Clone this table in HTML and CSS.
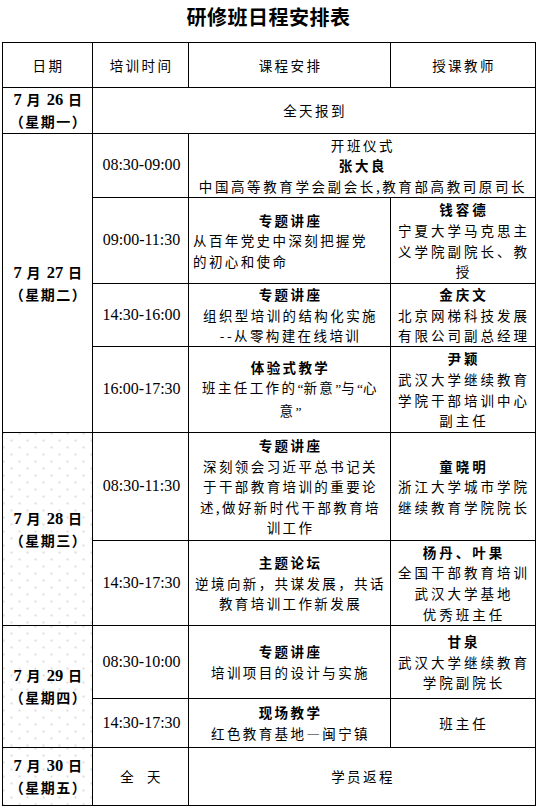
FILE: index.html
```html
<!DOCTYPE html>
<html lang="zh-CN">
<head>
<meta charset="utf-8">
<title>研修班日程安排表</title>
<link rel="stylesheet" href="styles.css">
</head>
<body>
<div class="page">
  <h1 class="title">研修班日程安排表</h1>
  <table class="sched">
    <colgroup>
      <col class="c1"><col class="c2"><col class="c3"><col class="c4">
    </colgroup>
    <tr class="h45">
      <td>日期</td><td>培训时间</td><td>课程安排</td><td>授课教师</td>
    </tr>
    <tr class="h46">
      <td class="date"><span class="num">7</span> 月 <span class="num">26</span> 日<br>（星期一）</td>
      <td colspan="3">全天报到</td>
    </tr>
    <tr class="h64">
      <td class="date" rowspan="4"><span class="num">7</span> 月 <span class="num">27</span> 日<br>（星期二）</td>
      <td class="time">08:30-09:00</td>
      <td colspan="2" class="wide">开班仪式<br><b>张大良</b><br>中国高等教育学会副会长,教育部高教司原司长</td>
    </tr>
    <tr class="h86">
      <td class="time">09:00-11:30</td>
      <td><b>专题讲座</b><br><span class="left">从百年党史中深刻把握党<br>的初心和使命</span></td>
      <td class="teach"><b>钱容德</b><br>宁夏大学马克思主<br>义学院副院长、教<br>授</td>
    </tr>
    <tr class="h63">
      <td class="time">14:30-16:00</td>
      <td><b>专题讲座</b><br>组织型培训的结构化实施<br>--从零构建在线培训</td>
      <td class="teach"><b>金庆文</b><br>北京网梯科技发展<br>有限公司副总经理</td>
    </tr>
    <tr class="h86">
      <td class="time">16:00-17:30</td>
      <td><b>体验式教学</b><br>班主任工作的<span class="lat">“</span>新意<span class="lat">”</span>与<span class="lat">“</span>心<br>意<span class="lat">”</span></td>
      <td class="teach"><b>尹颖</b><br>武汉大学继续教育<br>学院干部培训中心<br>副主任</td>
    </tr>
    <tr class="h108">
      <td class="date dots" rowspan="2"><span class="num">7</span> 月 <span class="num">28</span> 日<br>（星期三）</td>
      <td class="time">08:30-11:30</td>
      <td><b>专题讲座</b><br>深刻领会习近平总书记关<br>于干部教育培训的重要论<br>述,做好新时代干部教育培<br>训工作</td>
      <td class="teach"><b>童晓明</b><br>浙江大学城市学院<br>继续教育学院院长</td>
    </tr>
    <tr class="h85">
      <td class="time">14:30-17:30</td>
      <td><b>主题论坛</b><br>逆境向新，共谋发展，共话<br>教育培训工作新发展</td>
      <td class="teach"><b>杨丹、叶果</b><br>全国干部教育培训<br>武汉大学基地<br>优秀班主任</td>
    </tr>
    <tr class="h73">
      <td class="date dots" rowspan="2"><span class="num">7</span> 月 <span class="num">29</span> 日<br>（星期四）</td>
      <td class="time">08:30-10:00</td>
      <td><b>专题讲座</b><br>培训项目的设计与实施</td>
      <td class="teach"><b>甘泉</b><br>武汉大学继续教育<br>学院副院长</td>
    </tr>
    <tr class="h49">
      <td class="time">14:30-17:30</td>
      <td><b>现场教学</b><br>红色教育基地—闽宁镇</td>
      <td class="teach">班主任</td>
    </tr>
    <tr class="h58">
      <td class="date dots"><span class="num">7</span> 月 <span class="num">30</span> 日<br>（星期五）</td>
      <td>全&nbsp;&nbsp;天</td>
      <td colspan="2">学员返程</td>
    </tr>
  </table>
</div>
</body>
</html>
```

FILE: styles.css
```css
html, body {
  margin: 0;
  padding: 0;
  background: #ffffff;
}

.page {
  padding: 0 2px;
  color: #000;
  font-family: "Noto Sans CJK SC", sans-serif;
}

.title {
  margin: 0 0 8px 0;
  height: 34px;
  line-height: 34px;
  text-align: center;
  font-family: "Noto Sans CJK SC", sans-serif;
  font-size: 20px;
  font-weight: 700;
  letter-spacing: 0.5px;
}

.sched {
  width: 533px;
  border-collapse: collapse;
  table-layout: fixed;
  font-size: 13.5px;
  line-height: 20.6px;
  letter-spacing: 2.4px;
}

.c1 { width: 90px; }
.c2 { width: 96px; }
.c3 { width: 202px; }
.c4 { width: 145px; }

.sched td {
  border: 1px solid #000;
  padding: 0 2px 0 4px;
  text-align: center;
  vertical-align: middle;
  white-space: nowrap;
}

.sched b {
  font-weight: 700;
}

.h45 { height: 45px; }
.h46 { height: 46px; }
.h49 { height: 49px; }
.h58 { height: 58px; }
.h63 { height: 63px; }
.h64 { height: 64px; }
.h73 { height: 73px; }
.h85 { height: 85px; }
.h86 { height: 86px; }
.h108 { height: 108px; }

.date {
  font-weight: 700;
  font-size: 14px;
  letter-spacing: 1.5px;
  padding: 0 2px 0 2px;
}

.date .num {
  font-family: "Liberation Serif", serif;
  font-size: 16.5px;
  letter-spacing: 0;
}

.lat {
  font-family: "Liberation Serif", serif;
  letter-spacing: 0;
}

.dots {
  background-color: #fff;
  background-image:
    radial-gradient(circle, #dcdcdc 0.8px, transparent 1.2px),
    radial-gradient(circle, #dcdcdc 0.8px, transparent 1.2px);
  background-size: 16px 14px, 16px 14px;
  background-position: 0 0, 8px 7px;
}

.time {
  font-family: "Liberation Serif", serif;
  font-size: 16px;
  letter-spacing: 0;
}

.wide {
  letter-spacing: 2.6px;
}

.left {
  display: inline-block;
  text-align: left;
  width: 100%;
}

.teach {
  letter-spacing: 3px;
}
```
